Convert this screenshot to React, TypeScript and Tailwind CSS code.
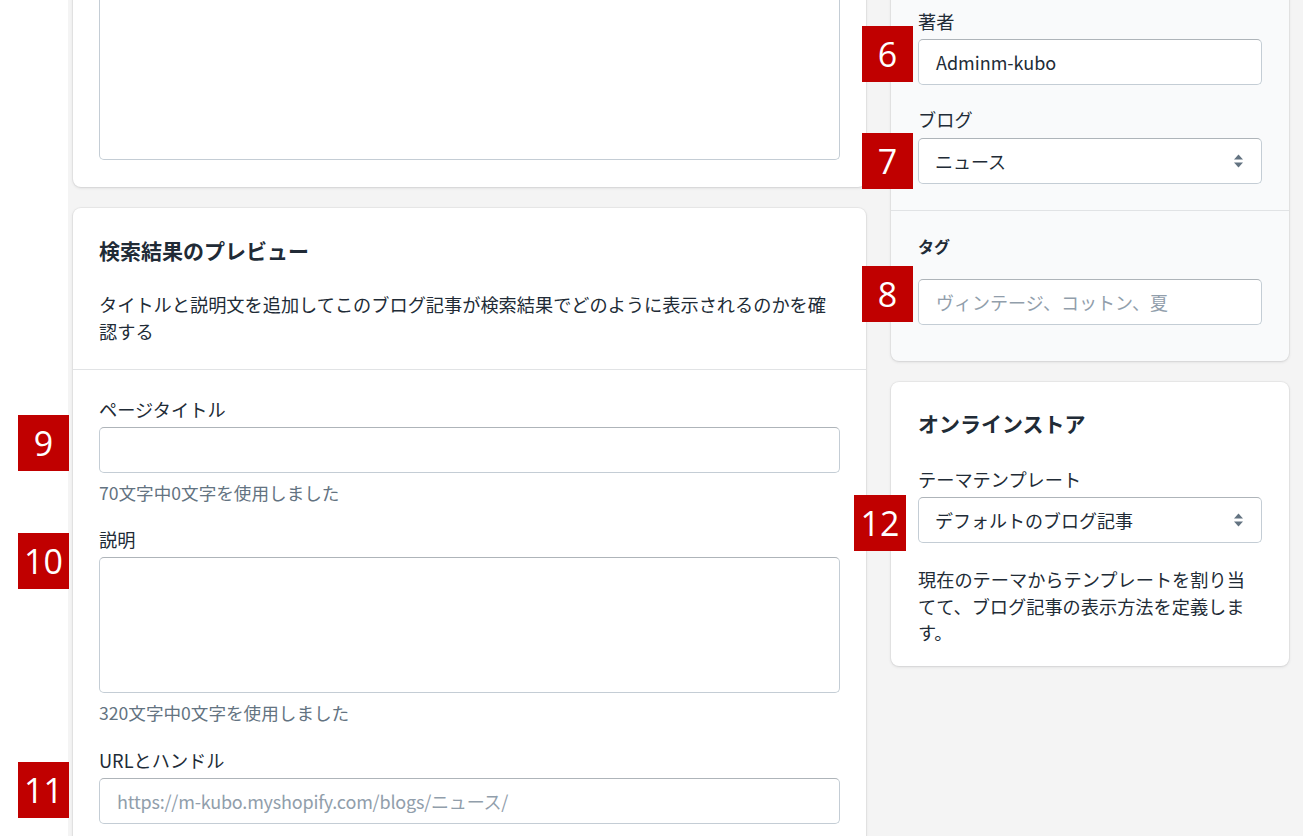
import React from "react";

const font = { fontFamily: '"Noto Sans CJK JP", "Noto Sans", sans-serif' };

function Badge({ n, className }: { n: string; className: string }) {
  return (
    <div
      className={`absolute z-10 flex items-center justify-center bg-[#c00000] text-[34px] leading-none text-white ${className}`}
      style={{ fontFamily: '"Open Sans", "Noto Sans", sans-serif' }}
    >
      {n}
    </div>
  );
}

function Arrows() {
  return (
    <svg width="11" height="16" viewBox="0 0 11 16" className="absolute right-[17px] top-1/2 -translate-y-1/2">
      <path d="M5.5 1.5 L10 6.5 H1 Z" fill="#637381" />
      <path d="M5.5 14.5 L10 9.5 H1 Z" fill="#637381" />
    </svg>
  );
}

const inputCls =
  "flex h-[46px] w-full items-center rounded-[5px] border border-[#c4cdd5] border-t-[#aeb4b9] bg-white px-[17px] text-[18px]";

const cardShadow = "shadow-[0_0_0_1px_rgba(63,63,68,0.05),0_1px_3px_0_rgba(63,63,68,0.15)]";

export default function App() {
  return (
    <div className="flex h-[836px] w-[1303px] overflow-hidden bg-[#f4f4f4] text-[#212b36]" style={font}>
      <div className="w-[68px] shrink-0 bg-white" />

      {/* main column */}
      <div className="ml-[5px] -mt-[40px] flex w-[793px] shrink-0 flex-col gap-[21px]">
        <div className={`rounded-b-[8px] bg-white px-[26px] pb-[27px] pt-[26px] ${cardShadow}`}>
          <div className="h-[174px] rounded-[5px] border border-[#c4cdd5] border-t-[#aeb4b9] bg-white" />
        </div>

        <div className={`rounded-[8px] bg-white ${cardShadow}`}>
          <div className="px-[26px] pb-[24px] pt-[28px]">
            <h2 className="text-[21px] font-bold leading-[28px]">検索結果のプレビュー</h2>
            <p className="mt-[27px] text-[18.2px] leading-[27px]">
              タイトルと説明文を追加してこのブログ記事が検索結果でどのように表示されるのかを確認する
            </p>
          </div>
          <div className="border-t border-[#e1e3e5] px-[26px] pt-[26px]">
            <label className="block text-[18.2px] leading-[26px]">ページタイトル</label>
            <div className="relative mt-[5px]">
              <Badge n="9" className="-left-[81px] -top-[12px] h-[56px] w-[51px]" />
              <div className={inputCls} />
            </div>
            <p className="mt-[7px] text-[17.6px] leading-[26px] text-[#637381]">70文字中0文字を使用しました</p>

            <label className="mt-[20px] block text-[18.2px] leading-[26px]">説明</label>
            <div className="relative mt-[5px]">
              <Badge n="10" className="-left-[81px] -top-[24px] h-[56px] w-[51px]" />
              <div className="h-[136px] rounded-[5px] border border-[#c4cdd5] border-t-[#aeb4b9] bg-white" />
            </div>
            <p className="mt-[7px] text-[17.6px] leading-[26px] text-[#637381]">320文字中0文字を使用しました</p>

            <label className="mt-[21px] block text-[18.2px] leading-[26px]">URLとハンドル</label>
            <div className="relative mt-[5px]">
              <Badge n="11" className="-left-[81px] -top-[16px] h-[56px] w-[51px]" />
              <div className={`${inputCls} tracking-[-0.2px] text-[#919eab]`}>https://m-kubo.myshopify.com/blogs/ニュース/</div>
            </div>
            <div className="h-[40px]" />
          </div>
        </div>
      </div>

      {/* sidebar */}
      <div className="ml-[25px] -mt-[20px] flex w-[398px] shrink-0 flex-col gap-[21px]">
        <div className={`rounded-b-[8px] bg-[#f9fafb] ${cardShadow}`}>
          <div className="px-[27px] pb-[26px] pt-[28px]">
            <label className="block text-[18.2px] leading-[26px]">著者</label>
            <div className="relative mt-[5px]">
              <Badge n="6" className="-left-[56px] -top-[13px] h-[56px] w-[51px]" />
              <div className={inputCls}>Adminm-kubo</div>
            </div>
            <label className="mt-[21px] block text-[18.2px] leading-[26px]">ブログ</label>
            <div className="relative mt-[6px]">
              <Badge n="7" className="-left-[56px] -top-[5px] h-[56px] w-[51px]" />
              <div className={`${inputCls} relative h-[45px] pl-[16px]`}>
                ニュース
                <Arrows />
              </div>
            </div>
          </div>
          <div className="border-t border-[#e1e3e5] px-[27px] pb-[36px] pt-[23px]">
            <label className="block text-[16px] font-bold leading-[24px]">タグ</label>
            <div className="relative mt-[21px]">
              <Badge n="8" className="-left-[56px] -top-[13px] h-[56px] w-[51px]" />
              <div className={`${inputCls} text-[#919eab]`}>ヴィンテージ、コットン、夏</div>
            </div>
          </div>
        </div>

        <div className={`rounded-[8px] bg-white px-[27px] pb-[20px] pt-[27px] ${cardShadow}`}>
          <h2 className="text-[21px] font-bold leading-[28px]">オンラインストア</h2>
          <label className="mt-[29px] block text-[18.2px] leading-[26px]">テーマテンプレート</label>
          <div className="relative mt-[5px]">
            <Badge n="12" className="-left-[64px] -top-[2px] h-[56px] w-[52px]" />
            <div className={`${inputCls} relative h-[45px] pl-[16px]`}>
              デフォルトのブログ記事
              <Arrows />
            </div>
          </div>
          <p className="mt-[23px] text-[18.2px] leading-[26.5px]">
            現在のテーマからテンプレートを割り当てて、ブログ記事の表示方法を定義します。
          </p>
        </div>
      </div>
    </div>
  );
}
